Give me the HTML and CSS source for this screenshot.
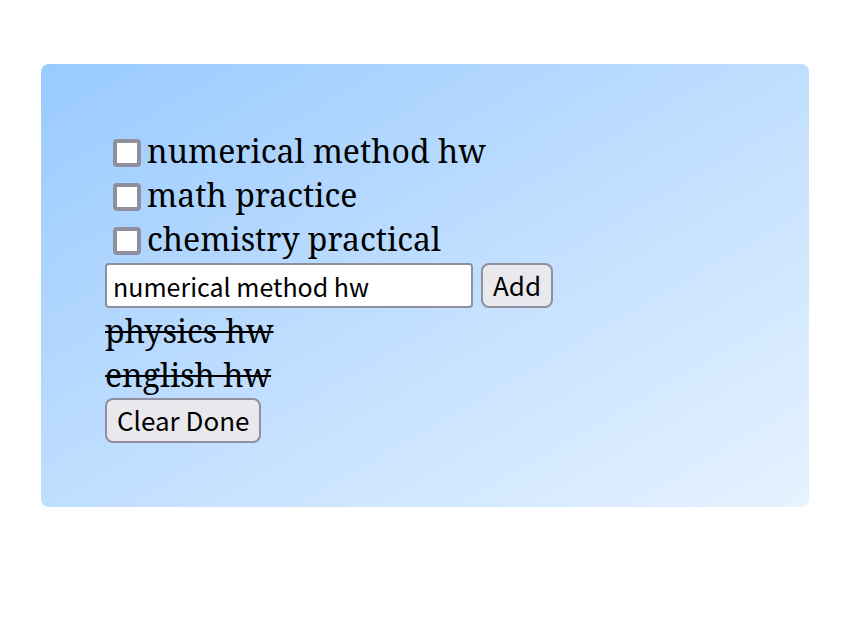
FILE: index.html
```html
<!DOCTYPE html>
<html lang="en">
<head>
<meta charset="utf-8">
<title>Todo</title>
<link rel="stylesheet" href="styles.css">
</head>
<body>
<main class="card">
  <ul class="list">
    <li class="row"><input class="check" type="checkbox" id="t1"><label for="t1">numerical method hw</label></li>
    <li class="row"><input class="check" type="checkbox" id="t2"><label for="t2">math practice</label></li>
    <li class="row"><input class="check" type="checkbox" id="t3"><label for="t3">chemistry practical</label></li>
  </ul>
  <form class="add">
    <input class="field" type="text" aria-label="New task" value="numerical method hw">
    <button class="button" type="button">Add</button>
  </form>
  <ul class="list">
    <li class="row done">physics hw</li>
    <li class="row done">english hw</li>
  </ul>
  <button class="button" type="button">Clear Done</button>
</main>
</body>
</html>
```
FILE: styles.css
```css
* {
  box-sizing: border-box;
}

body {
  margin: 64px 46px 0 41px;
  background: #fff;
  color: #000;
  font-family: "Noto Serif", "Droid Serif", "DejaVu Serif", serif;
  font-size: 32px;
  line-height: 44px;
}

.card {
  padding: 64px;
  border-radius: 8px;
  background: linear-gradient(to bottom right, #99caff, #e6f2ff);
}

.list {
  margin: 0;
  padding: 1px 0;
  list-style: none;
}

.row {
  display: flex;
  align-items: center;
  height: 44px;
}

.check {
  appearance: none;
  width: 28px;
  height: 28px;
  margin: 4px 6px 0 8px;
  border: 4px solid #8f8f9d;
  border-radius: 4px;
  background: #fff;
}

.add {
  display: flex;
  gap: 8px;
  margin-top: 1px;
}

.field,
.button {
  display: block;
  height: 45px;
  border: 2px solid #8f8f9d;
  color: #000;
  font-family: "Noto Sans CJK JP", "Noto Sans", sans-serif;
}

.field {
  width: 368px;
  max-width: 100%;
  padding: 0 6px;
  border-radius: 4px;
  background: #fff;
  font-size: 25px;
}

.button {
  padding: 0 10px 2px;
  border-radius: 8px;
  background: #e9e9ed;
  font-size: 26px;
}

.done {
  text-decoration: line-through 2px;
}
```
